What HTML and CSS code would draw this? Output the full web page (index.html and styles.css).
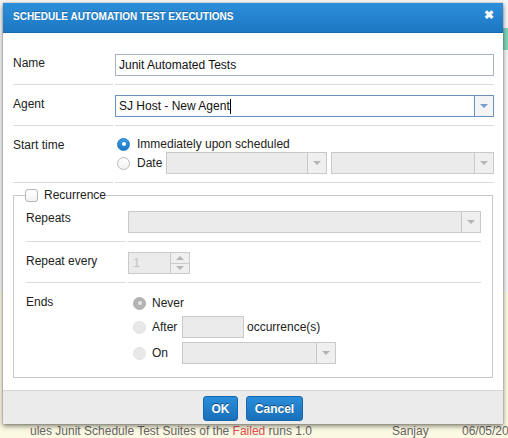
FILE: index.html
```html
<!DOCTYPE html>
<html>
<head>
<meta charset="utf-8">
<link rel="stylesheet" href="styles.css">
</head>
<body>
<div class="page">
  <div class="page-top">
    <div class="pg-green"></div>
  </div>
  <div class="page-yellow">
    <div class="pg-line">
      <span class="pg-desc">ules Junit Schedule Test Suites of the <span class="red">Failed</span> runs 1.0</span>
      <span class="pg-user">Sanjay</span>
      <span class="pg-date">06/05/20</span>
    </div>
  </div>
</div>

<div class="dialog">
  <div class="dlg-head">
    <span class="dlg-title">SCHEDULE AUTOMATION TEST EXECUTIONS</span>
    <span class="dlg-close">&#x2716;</span>
  </div>
  <div class="dlg-body">
    <div class="row">
      <div class="lbl">Name</div>
      <div class="fld"><div class="input">Junit Automated Tests</div></div>
    </div>
    <div class="row">
      <div class="lbl">Agent</div>
      <div class="fld">
        <div class="select focus">
          <div class="val">SJ Host - New Agent<span class="caret"></span></div>
          <div class="btn"><span class="tri"></span></div>
        </div>
      </div>
    </div>
    <div class="row">
      <div class="lbl">Start time</div>
      <div class="fld col">
        <div class="opt first"><span class="radio on"></span><span>Immediately upon scheduled</span></div>
        <div class="opt">
          <span class="radio"></span><span class="optlbl">Date</span>
          <div class="select dis w161"><div class="val"></div><div class="btn"><span class="tri"></span></div></div>
          <div class="select dis w163"><div class="val"></div><div class="btn"><span class="tri"></span></div></div>
        </div>
      </div>
    </div>

    <fieldset class="rec">
      <legend><span class="check"></span><span>Recurrence</span></legend>
      <div class="row in">
        <div class="lbl">Repeats</div>
        <div class="fld"><div class="select dis"><div class="val"></div><div class="btn"><span class="tri"></span></div></div></div>
      </div>
      <div class="row in">
        <div class="lbl">Repeat every</div>
        <div class="fld">
          <div class="spin"><div class="val">1</div><div class="sbtns"><span class="up"><span class="tri-up"></span></span><span class="dn"><span class="tri"></span></span></div></div>
        </div>
      </div>
      <div class="row in last">
        <div class="lbl">Ends</div>
        <div class="fld col ends">
          <div class="opt never"><span class="radio dis sel"></span><span>Never</span></div>
          <div class="opt"><span class="radio dis"></span><span class="optlbl2">After</span><div class="input dis w61"></div><span class="occ">occurrence(s)</span></div>
          <div class="opt onrow"><span class="radio dis"></span><span class="optlbl2">On</span><div class="select dis w154"><div class="val"></div><div class="btn"><span class="tri"></span></div></div></div>
        </div>
      </div>
    </fieldset>
  </div>
  <div class="dlg-foot">
    <button class="b">OK</button>
    <button class="b">Cancel</button>
  </div>
</div>
</body>
</html>
```

FILE: styles.css
```css
* { box-sizing: border-box; }
html, body { margin: 0; padding: 0; }
body {
  width: 508px;
  height: 438px;
  overflow: hidden;
  position: relative;
  font-family: "Liberation Sans", Arial, Helvetica, sans-serif;
  font-size: 12px;
  color: #222;
}

/* background page */
.page { height: 438px; display: flex; flex-direction: column; }
.page-top {
  height: 292px;
  background: #f6f6f6;
  display: flex;
  justify-content: flex-end;
  align-items: flex-start;
}
.pg-green { width: 5px; height: 22px; margin-top: 28px; background: #7fd6b6; }
.page-yellow {
  flex: 1;
  background: #fcf9e3;
  display: flex;
  flex-direction: column;
  justify-content: flex-end;
}
.pg-line {
  height: 14px;
  display: flex;
  line-height: 14px;
  font-size: 12px;
  color: #666;
}
.pg-desc { flex: none; width: 392px; padding-left: 30px; white-space: nowrap; overflow: hidden; }
.pg-desc .red { color: #e05050; }
.pg-user { flex: none; width: 70px; }
.pg-date { white-space: nowrap; }

/* dialog */
.dialog {
  position: absolute;
  left: 3px;
  top: 3px;
  width: 500px;
  height: 421px;
  background: #fff;
  box-shadow: 0 2px 5px rgba(0,0,0,0.5), 0 0 1px rgba(0,0,0,0.4);
  display: flex;
  flex-direction: column;
}
.dlg-head {
  height: 30px;
  background: linear-gradient(#2c8fdb, #1d77c2);
  border-bottom: 1px solid #1a69ad;
  display: flex;
  align-items: center;
  justify-content: space-between;
  padding: 0 9px 2px 10px;
  color: #fff;
}
.dlg-title {
  font-weight: bold;
  font-size: 10px;
  text-shadow: 0 -1px 0 rgba(0,0,0,0.25);
}
.dlg-close { font-size: 12px; font-weight: bold; line-height: 12px; margin-top: -4px; }

.dlg-body {
  flex: 1;
  padding: 11px 9px 0 10px;
}
.row {
  display: grid;
  grid-template-columns: 100px 379px;
  column-gap: 2px;
}
.row > .lbl, .row > .fld {
  padding: 10px 0 8px;
  border-bottom: 1px solid #dcdcdc;
}
.lbl { padding-top: 12px !important; line-height: 14px; }
.fld.col { display: flex; flex-direction: column; }

.input {
  height: 22px;
  border: 1px solid #aab3be;
  padding: 0 3px;
  line-height: 20px;
  font-size: 12px;
  color: #111;
}
.input.dis { background: #ebebeb; border-color: #cacaca; }
.w61 { width: 62px; }

.select {
  height: 22px;
  display: flex;
  border: 1px solid #c9c9c9;
  background: #ebebeb;
}
.select .val { flex: 1; line-height: 20px; padding: 0 3px; color: #111; display: flex; align-items: center; }
.select .btn {
  width: 19px;
  border-left: 1px solid #c9c9c9;
  background: #efefef;
  display: flex;
  align-items: center;
  justify-content: center;
}
.select.focus { border-color: #6a94be; background: #fff; }
.select.focus .btn { border-left-color: #6a94be; background: #f4f4f4; }
.select.focus .tri { border-top-color: #7a9ccb; }
.caret { display: inline-block; width: 1px; height: 15px; background: #000; }
.tri {
  width: 0; height: 0;
  border-left: 4px solid transparent;
  border-right: 4px solid transparent;
  border-top: 4px solid #b5b5b5;
}
.tri-up {
  width: 0; height: 0;
  border-left: 4px solid transparent;
  border-right: 4px solid transparent;
  border-bottom: 4px solid #b5b5b5;
}
.w161 { width: 162px; }
.w163 { width: 163px; margin-left: 4px; }
.w154 { width: 154px; }

/* radios */
.opt { display: flex; align-items: center; }
.opt.first { height: 16px; }
.radio {
  width: 13px; height: 13px;
  border-radius: 50%;
  border: 1px solid #b9b9b9;
  background: linear-gradient(#fff, #f2f2f2);
  margin: 0 7px 0 2px;
  flex: none;
  position: relative;
}
.radio.on {
  border-color: #1f7cc6;
  background: linear-gradient(#3a9be0, #1c78c4);
}
.radio.on::after, .radio.sel::after {
  content: "";
  position: absolute;
  left: 3.5px; top: 3.5px;
  width: 4px; height: 4px;
  border-radius: 50%;
  background: #fff;
}
.radio.dis { border-color: #e2e2e2; background: #e8e8e8; margin-left: 5px; margin-right: 6px; }
.radio.sel { border-color: #b0b0b0; background: #b3b3b3; }
.radio.sel::after { background: #e6e6e6; }
.optlbl { width: 29px; }
.optlbl2 { width: 30px; }
.occ { margin-left: 3px; }

/* fieldset */
.rec {
  margin: 5px 0 0 0;
  padding: 0 10px 13px 12px;
  border: 1px solid #c8c8c8;
  width: 480px;
}
.rec legend {
  padding: 0;
  margin-left: -1px;
  display: flex;
  align-items: center;
  height: 14px;
}
.check {
  width: 13px; height: 13px;
  border: 1px solid #b5b5b5;
  border-radius: 3px;
  background: linear-gradient(#fff, #f3f3f3);
  margin-right: 6px;
}
.row.in { grid-template-columns: 100px 353px; }
.row.in:first-of-type > .fld { padding-top: 9px; }
.row.in:first-of-type > .lbl { padding-top: 9px !important; }
.row.last > .lbl, .row.last > .fld { border-bottom: none; padding-bottom: 0; }
.ends .opt { height: 22px; }
.ends .never { height: 20px; }
.ends .opt + .opt { margin-top: 3px; }
.ends .onrow { margin-top: 4px !important; }

/* spinner */
.spin {
  width: 62px; height: 22px;
  display: flex;
  border: 1px solid #cacaca;
  background: #ebebeb;
}
.spin .val { flex: 1; padding-left: 4px; line-height: 20px; color: #c4c4c4; font-size: 13px; }
.sbtns { width: 19px; border-left: 1px solid #cacaca; display: flex; flex-direction: column; }
.sbtns > span { flex: 1; display: flex; align-items: center; justify-content: center; background: #efefef; }
.sbtns > .up { border-bottom: 1px solid #cacaca; }

/* footer */
.dlg-foot {
  height: 34px;
  border-top: 1px solid #d6d6d6;
  background: #ebebeb;
  display: flex;
  justify-content: center;
  align-items: flex-start;
  padding-top: 5px;
  gap: 8px;
}
.b {
  height: 25px;
  padding: 0;
  border: 1px solid #1767ab;
  border-radius: 3px;
  background: linear-gradient(#2b8edb, #1a6fb9);
  color: #fff;
  font-family: "Liberation Sans", Arial, sans-serif;
  font-size: 12px;
  font-weight: bold;
  text-shadow: 0 -1px 0 rgba(0,0,0,0.45);
}
.b:first-child { width: 35px; }
.b:last-child { width: 57px; }
```
